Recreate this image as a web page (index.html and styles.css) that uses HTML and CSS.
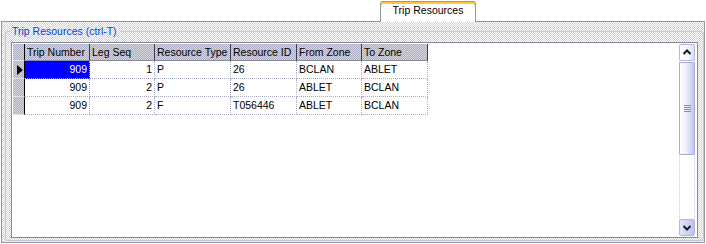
FILE: index.html
```html
<!DOCTYPE html>
<html lang="en">
  <head>
    <meta charset="UTF-8">
    <title>Trip Resources</title>
    <link rel="stylesheet" href="styles.css">
  </head>
  <body>
    <div class="tabstrip">
      <div class="tab-filler tab-filler-left"></div>
      <div class="tab">Trip Resources</div>
      <div class="tab-filler"></div>
    </div>

    <div class="tab-page">
      <fieldset class="groupbox">
        <legend>Trip Resources (ctrl-T)</legend>
        <div class="grid">
          <div class="grid-body">
            <div class="grid-row grid-head">
              <div class="row-head"></div>
              <div class="col-head">Trip Number</div>
              <div class="col-head">Leg Seq</div>
              <div class="col-head">Resource Type</div>
              <div class="col-head">Resource ID</div>
              <div class="col-head">From Zone</div>
              <div class="col-head">To Zone</div>
            </div>
            <div class="grid-row">
              <div class="row-head"><span class="pointer"></span></div>
              <div class="cell num selected">909</div>
              <div class="cell num">1</div>
              <div class="cell">P</div>
              <div class="cell">26</div>
              <div class="cell">BCLAN</div>
              <div class="cell">ABLET</div>
            </div>
            <div class="grid-row">
              <div class="row-head"></div>
              <div class="cell num">909</div>
              <div class="cell num">2</div>
              <div class="cell">P</div>
              <div class="cell">26</div>
              <div class="cell">ABLET</div>
              <div class="cell">BCLAN</div>
            </div>
            <div class="grid-row">
              <div class="row-head"></div>
              <div class="cell num">909</div>
              <div class="cell num">2</div>
              <div class="cell">F</div>
              <div class="cell">T056446</div>
              <div class="cell">ABLET</div>
              <div class="cell">BCLAN</div>
            </div>
          </div>

          <div class="scrollbar">
            <div class="scroll-btn scroll-up">
              <svg width="14" height="15" viewBox="0 0 14 15">
                <polyline points="3.5,9 7,5.5 10.5,9" fill="none" stroke="#1a1a2a" stroke-width="2"/>
              </svg>
            </div>
            <div class="scroll-track">
              <div class="scroll-thumb"><span class="grip"></span></div>
            </div>
            <div class="scroll-btn scroll-down">
              <svg width="14" height="15" viewBox="0 0 14 15">
                <polyline points="3.5,6 7,9.5 10.5,6" fill="none" stroke="#1a1a2a" stroke-width="2"/>
              </svg>
            </div>
          </div>
        </div>
      </fieldset>
    </div>
  </body>
</html>
```

FILE: styles.css
```css
* {
  box-sizing: border-box;
  margin: 0;
  padding: 0;
}

body {
  width: 706px;
  height: 244px;
  overflow: hidden;
  background: #fff;
  font-family: "Liberation Sans", Arial, sans-serif;
  font-size: 10.5px;
  line-height: 12px;
  color: #000;
}

/* Tab strip */
.tabstrip {
  display: flex;
  width: 704px;
  height: 22px;
  margin-left: 1px;
}

.tab-filler {
  flex: 1;
  border-bottom: 1px solid #919b9c;
}

.tab-filler-left {
  flex: 0 0 379px;
}

.tab {
  width: 96px;
  height: 21px;
  margin-top: 1px;
  padding-top: 2px;
  text-align: center;
  background: #fff;
  border: 1px solid #919b9c;
  border-top-color: #e68b2c;
  border-bottom: none;
  border-radius: 3px 3px 0 0;
  box-shadow: inset 0 2px 0 #ffc73c;
}

/* Tab page */
.tab-page {
  width: 704px;
  height: 221px;
  margin-left: 1px;
  padding: 3px 0 1px 3px;
  border: 1px solid #919b9c;
  border-top: none;
  background-image: repeating-conic-gradient(#cbcef6 0 25%, #fff 0 50%);
  background-size: 2px 2px;
}

.groupbox {
  width: 699px;
  height: 216px;
  padding: 5px 5px 2px 5px;
  border: 1px solid #c6c6da;
  border-radius: 3px;
  min-inline-size: 0;
}

.groupbox legend {
  padding: 0 3px 0 1px;
  color: #0046d5;
  line-height: 12px;
}

/* Data grid */
.grid {
  display: flex;
  height: 196px;
  padding: 1px;
  border: 1px solid #8a8aa2;
  background: #fff;
}

.grid-body {
  flex: 1;
}

.grid-row {
  display: grid;
  grid-template-columns: 12px 65px 65px 76px 66px 65px 66px;
  height: 18px;
}

.grid-head {
  height: 17px;
}

.row-head,
.col-head {
  background-image: repeating-conic-gradient(#acacc2 0 25%, #d6d6de 0 50%);
  background-size: 2px 2px;
}

.row-head {
  display: flex;
  align-items: center;
  justify-content: center;
  border-right: 1px solid #000;
  border-bottom: 1px solid #e4e4ee;
}

.col-head {
  padding: 0 2px;
  line-height: 16px;
  white-space: nowrap;
  overflow: hidden;
  border-right: 1px solid #3e3e48;
  border-bottom: 1px solid #8a8a9c;
}

.pointer {
  width: 0;
  height: 0;
  margin-left: 2px;
  border-left: 6px solid #000;
  border-top: 5px solid transparent;
  border-bottom: 5px solid transparent;
}

.cell {
  padding: 0 2px;
  line-height: 17px;
  white-space: nowrap;
  overflow: hidden;
  border-right: 1px dotted #a9a9c2;
  border-bottom: 1px dotted #a9a9c2;
}

.cell.num {
  text-align: right;
}

.cell.selected {
  background: #0000ff;
  color: #fff;
}

/* Scrollbar */
.scrollbar {
  display: flex;
  flex-direction: column;
  width: 16px;
  margin-right: 1px;
}

.scroll-btn {
  height: 17px;
  border: 1px solid #b4b8d8;
  border-radius: 2px;
}

.scroll-btn svg {
  display: block;
}

.scroll-up {
  background: linear-gradient(to right, #ffffff 0%, #f4f4fc 60%, #dcdef6 100%);
}

.scroll-down {
  background: linear-gradient(to right, #e4e6fa 0%, #cdd0f2 60%, #bcc0ec 100%);
}

.scroll-track {
  flex: 1;
  padding-top: 1px;
  background: #fff;
  border-left: 1px dotted #c4c6ec;
  border-right: 1px dotted #c4c6ec;
}

.scroll-thumb {
  display: flex;
  align-items: center;
  justify-content: center;
  height: 93px;
  margin: 0 -1px;
  border: 1px solid #a8acd8;
  border-radius: 2px;
  background: linear-gradient(to right, #ffffff 0%, #eceefc 45%, #c0c4f0 100%);
}

.grip {
  width: 7px;
  height: 7px;
  background: repeating-linear-gradient(#8c8cac 0 1px, transparent 1px 2px);
}
```
